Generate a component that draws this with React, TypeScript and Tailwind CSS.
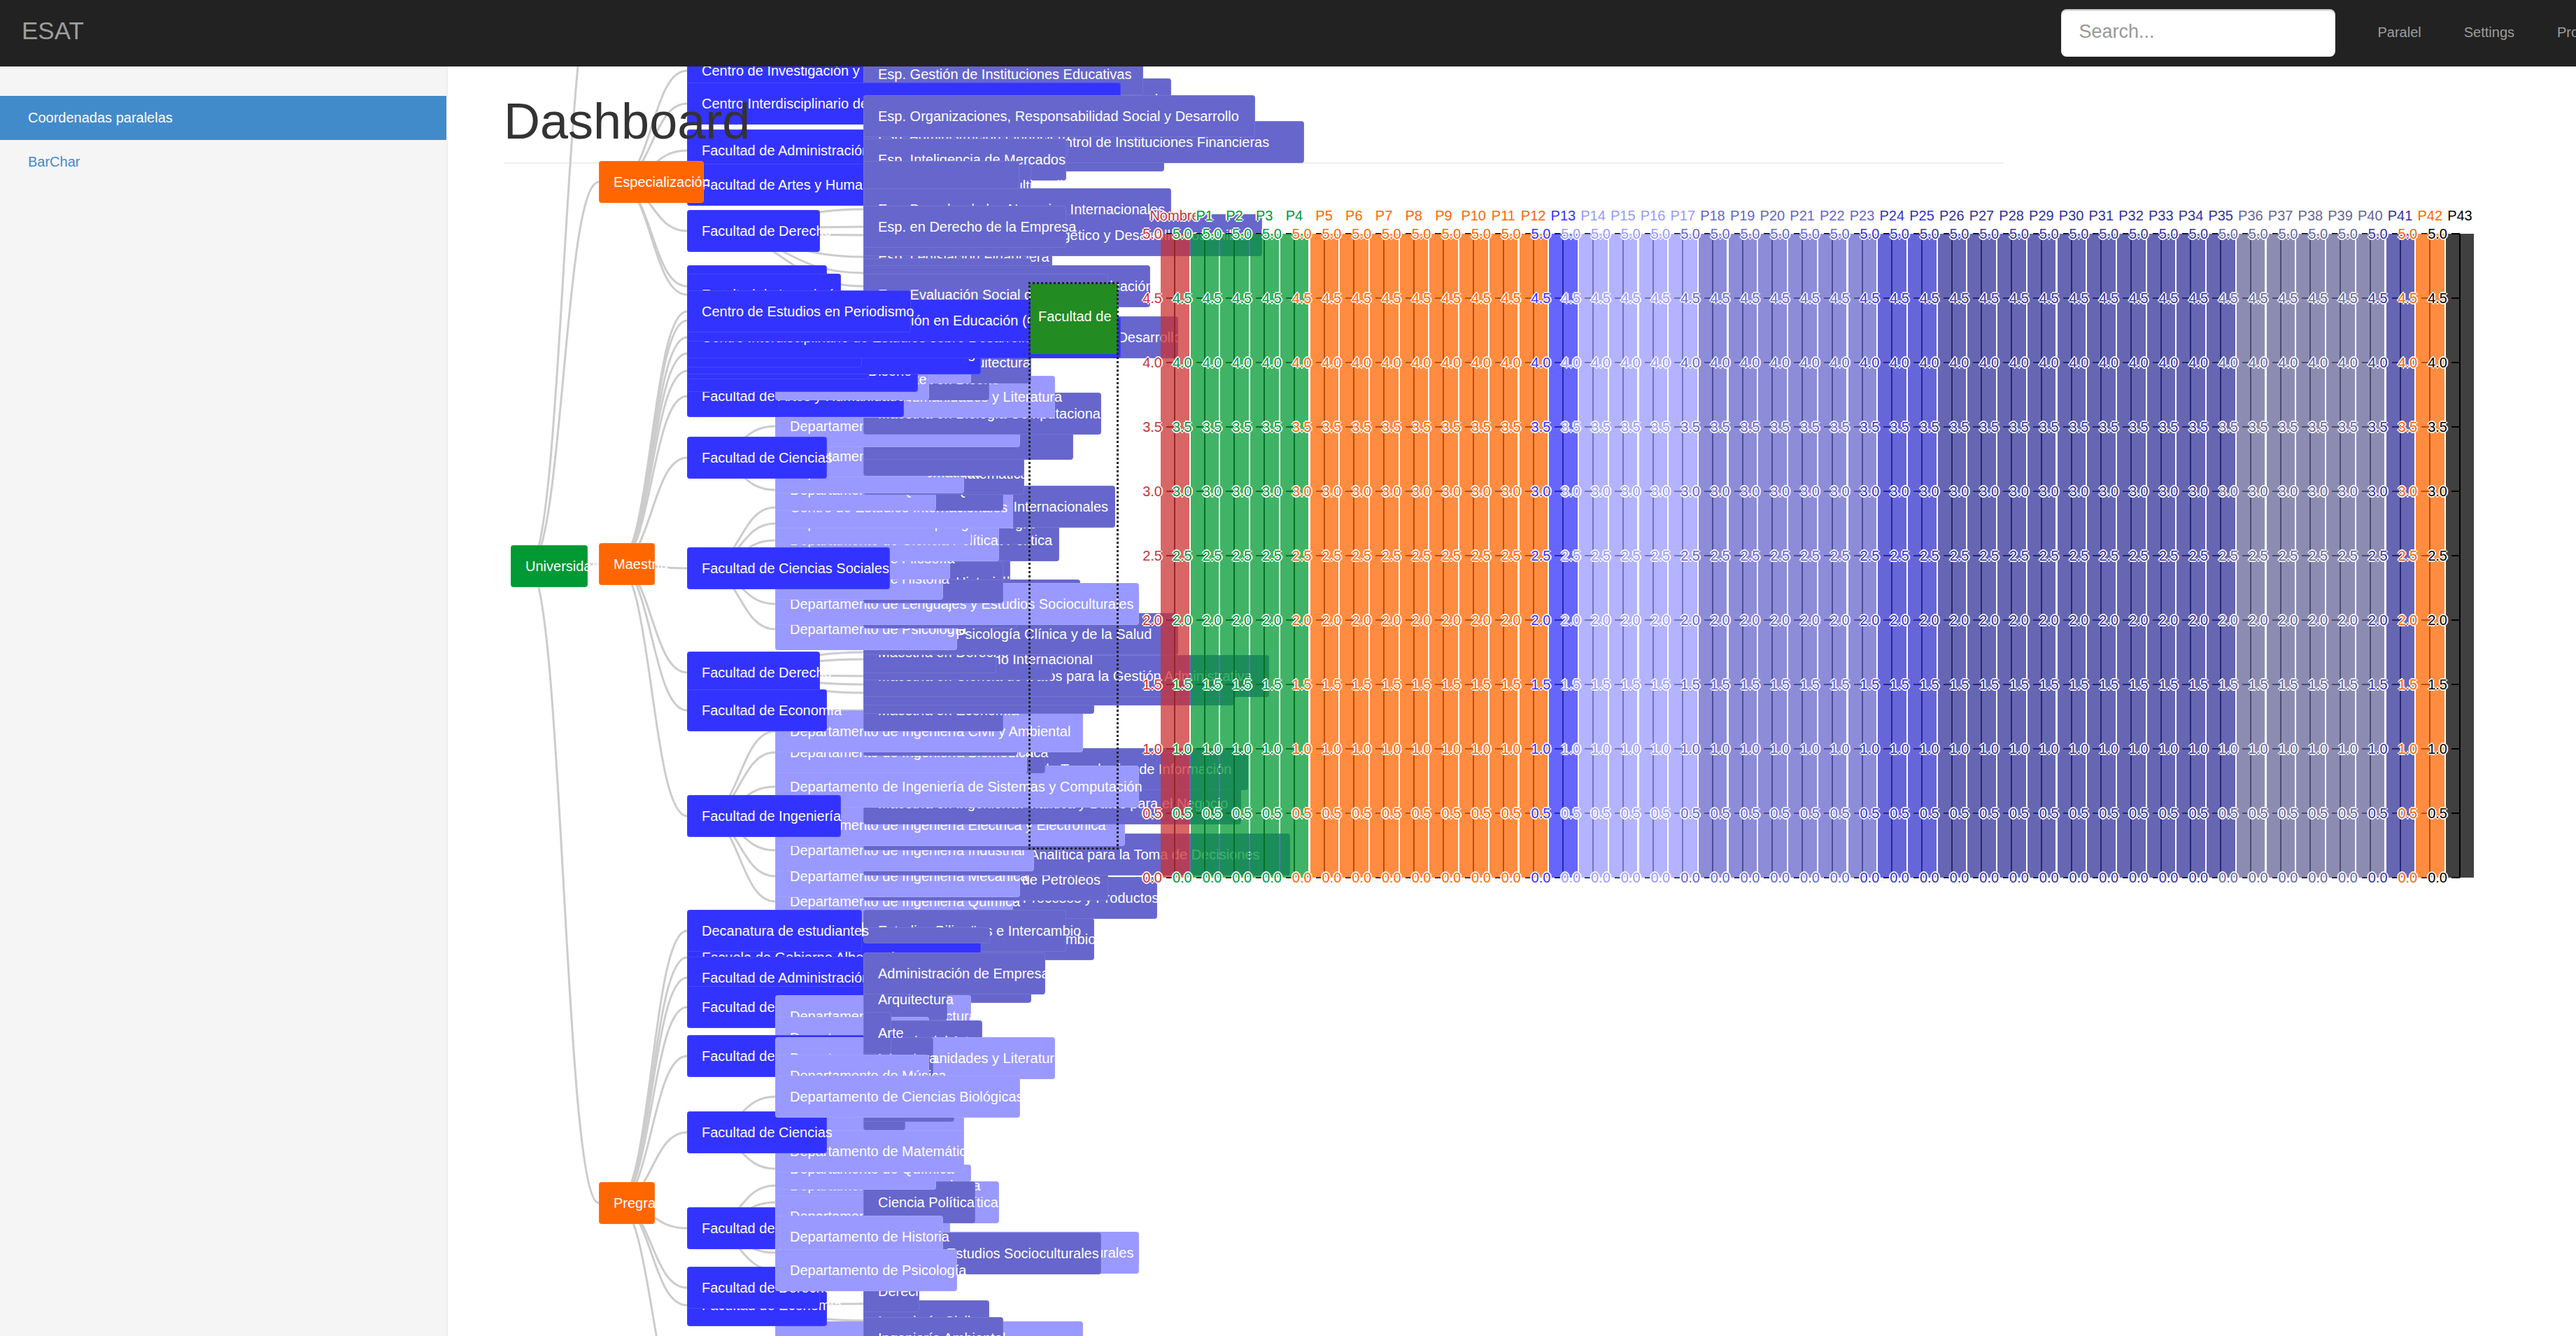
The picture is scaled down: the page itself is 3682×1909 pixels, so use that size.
import React from "react";

type TreeNode = [depth: number, y: number, label: string, w?: number, h?: number];

const DEPTHS = [
  { x: 730, cls: "bg-[#009933]" },
  { x: 856, cls: "bg-[#ff6600]" },
  { x: 982, cls: "bg-[#3333ff]" },
  { x: 1108, cls: "bg-[#9999ff]" },
  { x: 1234, cls: "bg-[#6666cc]" },
];

// paint order matters here, the d3 tree overlaps itself a lot
const NODES: TreeNode[] = [
  // Especializacion
  [2, 71, "Centro de Investigación y Formación en Educación"],
  [4, 112, "Esp. Gestión del Desarrollo Urbano-Regional", 440],
  [4, 76, "Esp. Gestión de Instituciones Educativas"],
  [2, 118, "Centro Interdisciplinario de Estudios sobre Desarrollo (CIDER)"],
  [2, 185, "Facultad de Administración"],
  [2, 234, "Facultad de Artes y Humanidades"],
  [4, 185, "Esp. Gerencia de Mercadeo y Estrategia Comercial", 430],
  [4, 173, "Esp. Gestión de Riesgos y Control de Instituciones Financieras", 630],
  [4, 164, "Esp. Administración Financiera", 293],
  [4, 136, "Esp. Organizaciones, Responsabilidad Social y Desarrollo"],
  [4, 198, "Esp. Inteligencia de Mercados"],
  [4, 235, "Esp. Producción de Multimedia", 240],
  [4, 230, "", 223],
  [2, 300, "Facultad de Derecho"],
  [4, 269, "Esp. Derecho de los Negocios Internacionales"],
  [4, 337, "Esp. Legislación Financiera"],
  [4, 306, "Esp. en Derecho Minero Energético y Desarrollo Sostenible"],
  [4, 294, "Esp. en Derecho de la Empresa"],
  [4, 369, "Esp. Derecho Tributario", 240],
  [4, 379, "Esp. Evaluación y Gestión de Comunicación", 410],
  [4, 391, "Esp. Evaluación Social de Proyectos"],
  [4, 452, "Esp. Derecho Ambiental y Gestión del Desarrollo", 450],
  [2, 379, "Facultad de Economía"],
  [2, 391, "Facultad de Ingeniería"],
  [1, 230, "Especialización"],

  // Maestria, Ingenieria
  [4, 1253, "Maestría en Diseño de Procesos y Productos"],
  [3, 1258, "Departamento de Ingeniería Química"],
  [4, 1227, "Maestría en Ingeniería de Petróleos"],
  [3, 1222, "Departamento de Ingeniería Mecánica"],
  [4, 1191, "Maestría en Inteligencia Analítica para la Toma de Decisiones"],
  [3, 1185, "Departamento de Ingeniería Industrial"],
  [4, 1155, "Maestría en Ingeniería Industrial"],
  [3, 1149, "Departamento de Ingeniería Eléctrica y Electrónica"],
  [4, 1118, "Maestría en Ingeniería Analítica y Datos para el Negocio", 540],
  [4, 1069, "Maestría en Arquitecturas de Tecnologías de Información"],
  [3, 1094, "Departamento de Ingeniería de Sistemas y Computación"],
  [4, 1045, "Maestría en Ing. Biomédica"],
  [3, 1045, "Departamento de Ingeniería Biomédica"],
  [4, 1020, "Maestría en Ing. Civil"],
  [3, 1015, "Departamento de Ingeniería Civil y Ambiental"],
  [2, 1136, "Facultad de Ingeniería"],

  // Maestria, Economia y Derecho
  [4, 985, "Maestría en Economía"],
  [4, 960, "Maestría en Derecho Administrativo", 330],
  [4, 948, "Maestría en Administración", 530],
  [4, 936, "Maestría en Ciencia de Datos para la Gestión Administrativa", 580],
  [4, 912, "Maestría en Derecho Internacional", 270],
  [4, 902, "Maestría en Derecho"],
  [2, 931, "Facultad de Derecho"],
  [2, 985, "Facultad de Economía"],

  // Maestria, Ciencias Sociales
  [4, 876, "Maestría en Psicología Clínica y de la Salud", 450],
  [3, 869, "Departamento de Psicología"],
  [4, 790, "Maestría en Geografía"],
  [4, 764, "Maestría en Filosofía"],
  [4, 838, "Maestría en Psicología"],
  [4, 828, "Maestría en Estudios Culturales"],
  [3, 833, "Departamento de Lenguajes y Estudios Socioculturales"],
  [4, 802, "Maestría en Historia"],
  [4, 828, "", 200, 34],
  [3, 797, "Departamento de Historia"],
  [3, 768, "Departamento de Filosofía"],
  [4, 742, "Maestría en Ciencia Política"],
  [4, 718, "Maestría en Antropología"],
  [3, 742, "Departamento de Ciencia Política"],
  [3, 718, "Departamento de Antropología"],
  [4, 694, "Maestría en Estudios Internacionales"],
  [3, 695, "Centro de Estudios Internacionales"],
  [4, 670, "Maestría en Química", 200],
  [3, 670, "Departamento de Química"],
  [4, 647, "Maestría en Matemáticas"],
  [3, 645, "Departamento de Matemáticas"],
  [3, 622, "Departamento de Física"],
  [4, 620, "Maestría en Ciencias", 230],
  [4, 597, "Maestría en Biología", 300],
  [3, 579, "Departamento de Ciencias Biológicas"],
  [2, 624, "Facultad de Ciencias"],
  [2, 782, "Facultad de Ciencias Sociales"],

  // Maestria, Arquitectura, Artes y centros
  [4, 561, "Maestría en Biología Computacional"],
  [3, 537, "Departamento de Humanidades y Literatura"],
  [4, 512, "Maestría en Diseño"],
  [4, 488, "Maestría en Arquitectura"],
  [3, 488, "Departamento de Arquitectura"],
  [2, 536, "Facultad de Artes y Humanidades"],
  [3, 512, "Departamento de Arte", 220],
  [2, 500, "Facultad de Arquitectura y Diseño"],
  [2, 482, "Facultad de Administración"],
  [2, 475, "Escuela de Gobierno Alberto Lleras Camargo"],
  [2, 465, "Decanatura de estudiantes"],
  [2, 452, "Centro Interdisciplinario de Estudios sobre Desarrollo (CIDER)"],
  [2, 428, "Centro de Investigación y Formación en Educación (CIFE)"],
  [2, 415, "Centro de Estudios en Periodismo"],
  [1, 776, "Maestría"],

  // Pregrado
  [4, 1312, "Opción en Estudios de Intercambio"],
  [4, 1300, "Estudios Bilingües e Intercambio", 290],
  [2, 1338, "Escuela de Gobierno Alberto Lleras Camargo"],
  [4, 1325, "", 181, 23],
  [2, 1300, "Decanatura de estudiantes"],
  [2, 1367, "Facultad de Administración"],
  [2, 1409, "Facultad de Arquitectura y Diseño"],
  [4, 1373, "Arquitectura y Diseño Urbano", 240],
  [3, 1422, "Departamento de Arquitectura"],
  [4, 1398, "Arquitectura"],
  [4, 1361, "Administración de Empresas"],
  [3, 1453, "Departamento de Arte", 220],
  [4, 1458, "Historia del Arte"],
  [2, 1479, "Facultad de Artes y Humanidades"],
  [3, 1482, "Departamento de Humanidades y Literatura"],
  [4, 1482, "Literatura"],
  [4, 1446, "Arte"],
  [2, 1725, "Facultad de Ciencias Sociales"],
  [3, 1688, "Departamento de Ciencia Política"],
  [3, 1664, "Departamento de Antropología"],
  [3, 1708, "Departamento de Filosofía"],
  [4, 1688, "Ciencia Política"],
  [3, 1640, "Departamento de Química"],
  [3, 1568, "", 270],
  [3, 1615, "Departamento de Matemáticas"],
  [2, 1588, "Facultad de Ciencias"],
  [4, 1555, "Física"],
  [4, 1543, "Microbiología"],
  [3, 1507, "Departamento de Música"],
  [3, 1537, "Departamento de Ciencias Biológicas"],
  [3, 1760, "Departamento de Lenguajes y Estudios Socioculturales"],
  [4, 1761, "Lenguas y Estudios Socioculturales"],
  [3, 1737, "Departamento de Historia"],
  [3, 1888, "Departamento de Ingeniería Civil y Ambiental"],
  [4, 1858, "Ingeniería Civil", 180],
  [4, 1882, "Ingeniería Ambiental"],
  [4, 1815, "Derecho", 80],
  [2, 1835, "Facultad de Economía"],
  [2, 1810, "Facultad de Derecho"],
  [3, 1785, "Departamento de Psicología"],
  [1, 1689, "Pregrado"],

  [0, 779, "Universidad"],
];

// gray d3 links: from x, from y, to x, to y's
const LINKS: [number, number, number, number[]][] = [
  [755, 809, 856, [-37, 260, 806, 1719]],
  [881, 260, 982, [101, 148, 215, 264, 330, 409, 421]],
  [881, 806, 982, [445, 458, 482, 505, 530, 566, 654, 812, 961, 1015, 1166]],
  [881, 1719, 982, [1330, 1368, 1397, 1439, 1509, 1618, 1755, 1840, 1865, 2020]],
  [1007, 330, 1234, [299, 324, 336, 367, 409, 390]],
  [1007, 409, 1234, [421, 482]],
  [1007, 654, 1108, [609, 652, 675, 700]],
  [1007, 812, 1108, [725, 748, 772, 798, 827, 863, 899]],
  [1007, 961, 1234, [932, 942, 966, 978, 990]],
  [1007, 1015, 1234, [1015]],
  [1007, 1166, 1108, [1045, 1075, 1124, 1179, 1215, 1252, 1288]],
  [1007, 1618, 1108, [1567, 1598, 1645, 1670]],
  [1007, 1755, 1108, [1694, 1718, 1738, 1767, 1790, 1815]],
  [1007, 1865, 1234, [1863, 1887]],
];

const linkPath = (x0: number, y0: number, x1: number, y1: number) => {
  const mid = (x0 + x1) / 2;
  return `M${x0},${y0}C${mid},${y0} ${mid},${y1} ${x1},${y1}`;
};

const GROUPS = [
  { band: "bg-[#cc3333]/75", text: "text-[#cc3333]", n: 1 },
  { band: "bg-[#009933]/75", text: "text-[#009933]", n: 4 },
  { band: "bg-[#ff6600]/75", text: "text-[#ff6600]", n: 8 },
  { band: "bg-[#3333ff]/75", text: "text-[#3333ff]", n: 1 },
  { band: "bg-[#9999ff]/75", text: "text-[#9999ff]", n: 4 },
  { band: "bg-[#6666cc]/75", text: "text-[#6666cc]", n: 6 },
  { band: "bg-[#3333cc]/75", text: "text-[#3333cc]", n: 2 },
  { band: "bg-[#333399]/75", text: "text-[#333399]", n: 10 },
  { band: "bg-[#666699]/75", text: "text-[#666699]", n: 5 },
  { band: "bg-[#333399]/75", text: "text-[#333399]", n: 1 },
  { band: "bg-[#ff6600]/75", text: "text-[#ff6600]", n: 1 },
  { band: "bg-[#000000]/75", text: "text-[#000000]", n: 1 },
];

const AXES = GROUPS.flatMap((g) => Array.from({ length: g.n }, () => g)).map(
  (g, i) => ({
    ...g,
    name: i === 0 ? "Nombre" : `P${i}`,
    x: 1679 + 42.72 * i,
  })
);

const TICKS = [0, 0.5, 1, 1.5, 2, 2.5, 3, 3.5, 4, 4.5, 5];
const CHART_TOP = 334;
const CHART_BOTTOM = 1254;
const tickY = (v: number) => CHART_BOTTOM - (v * (CHART_BOTTOM - CHART_TOP)) / 5;

const HALO = "[text-shadow:0_2px_0_#fff,2px_0_0_#fff,0_-2px_0_#fff,-2px_0_0_#fff]";

const Tree: React.FC = () => (
  <>
    <svg className="absolute left-0 top-0" width={3682} height={1909}>
      {LINKS.flatMap(([x0, y0, x1, ys], i) =>
        ys.map((y) => (
          <path
            key={`${i}-${y}`}
            d={linkPath(x0, y0, x1, y)}
            fill="none"
            stroke="#ccc"
            strokeWidth={3}
          />
        ))
      )}
    </svg>
    {NODES.map(([d, y, label, w, h], i) => (
      <div
        key={i}
        className={`absolute flex items-center whitespace-nowrap rounded-[4px] border border-white/10 pl-5 text-[20px] text-white ${DEPTHS[d].cls}`}
        style={{
          left: DEPTHS[d].x,
          top: y,
          width: w ?? label.length * 10,
          height: h ?? 60,
        }}
      >
        {label}
      </div>
    ))}
    {/* selected node with its drag outline */}
    <div className="absolute left-[1473px] top-[405px] h-[101px] w-[124px] whitespace-nowrap rounded-[2px] bg-[#228b22] pl-[11px] pt-[32px] text-[20px] text-white">
      Facultad de
    </div>
    <div className="absolute left-[1470px] top-[403px] h-[811px] w-[129px] border-[3px] border-dotted border-[#222]" />
  </>
);

const Chart: React.FC = () => (
  <>
    {AXES.map((a) => (
      <div key={a.name}>
        <div
          className="absolute w-[2px] bg-black"
          style={{ left: a.x - 1, top: CHART_TOP, height: CHART_BOTTOM - CHART_TOP }}
        />
        {TICKS.map((v) => (
          <div
            key={v}
            className="absolute h-[2px] w-[12px] bg-black"
            style={{ left: a.x - 12, top: tickY(v) - 1 }}
          />
        ))}
      </div>
    ))}
    {AXES.map((a) => (
      <div
        key={a.name}
        className={`absolute w-[40.5px] ${a.band}`}
        style={{ left: a.x - 20, top: CHART_TOP, height: CHART_BOTTOM - CHART_TOP }}
      />
    ))}
    {AXES.map((a) => (
      <div key={a.name}>
        <div
          className={`absolute top-[296px] w-[100px] text-center text-[20px] leading-6 ${a.text} ${HALO}`}
          style={{ left: a.x - 50 }}
        >
          {a.name}
        </div>
        {TICKS.map((v) => (
          <div
            key={v}
            className={`absolute w-[40px] -translate-y-1/2 text-right text-[20px] leading-6 ${a.text} ${HALO}`}
            style={{ left: a.x - 58, top: tickY(v) }}
          >
            {v.toFixed(1)}
          </div>
        ))}
      </div>
    ))}
  </>
);

const App: React.FC = () => {
  return (
    <div className="relative flex h-screen w-full flex-col overflow-hidden bg-white font-['Liberation_Sans',Arial,sans-serif]">
      <nav className="relative z-20 flex h-[95px] shrink-0 items-center overflow-hidden bg-[#222222] pl-[31px]">
        <span className="w-[2914.5px] shrink-0 pb-[6px] text-[35px] text-[#9d9d9d]">ESAT</span>
        <div className="mb-[1px] flex h-[68px] w-[392px] shrink-0 items-center rounded-[8px] bg-white pb-[3px] pl-[26px] text-[27px] text-[#999999] shadow-[inset_0_2px_2px_rgba(0,0,0,0.25)]">
          Search...
        </div>
        <div className="ml-[61px] flex shrink-0 gap-[61px] pb-1 text-[20px] text-[#9d9d9d]">
          <span>Paralel</span>
          <span>Settings</span>
          <span>Profile</span>
        </div>
      </nav>

      <div className="flex min-h-0 flex-1">
        <aside className="w-[640px] shrink-0 border-r-2 border-[#eeeeee] bg-[#f5f5f5] pt-[42px] text-[20px]">
          <div className="flex h-[63px] items-center bg-[#428bca] pb-[2px] pl-10 text-white">
            Coordenadas paralelas
          </div>
          <div className="flex h-[63px] items-center pb-[2px] pl-10 text-[#428bca]">BarChar</div>
        </aside>
        <main className="flex-1 pl-[80px]">
          <h1 className="relative z-10 mt-[32px] h-[105px] text-[72px] leading-[92px] text-[#333333]">
            Dashboard
          </h1>
          <hr className="w-[2144px] border-t-2 border-[#eeeeee]" />
        </main>
      </div>

      <div className="pointer-events-none absolute inset-0 z-0">
        <Tree />
        <Chart />
      </div>
    </div>
  );
};

export default App;
